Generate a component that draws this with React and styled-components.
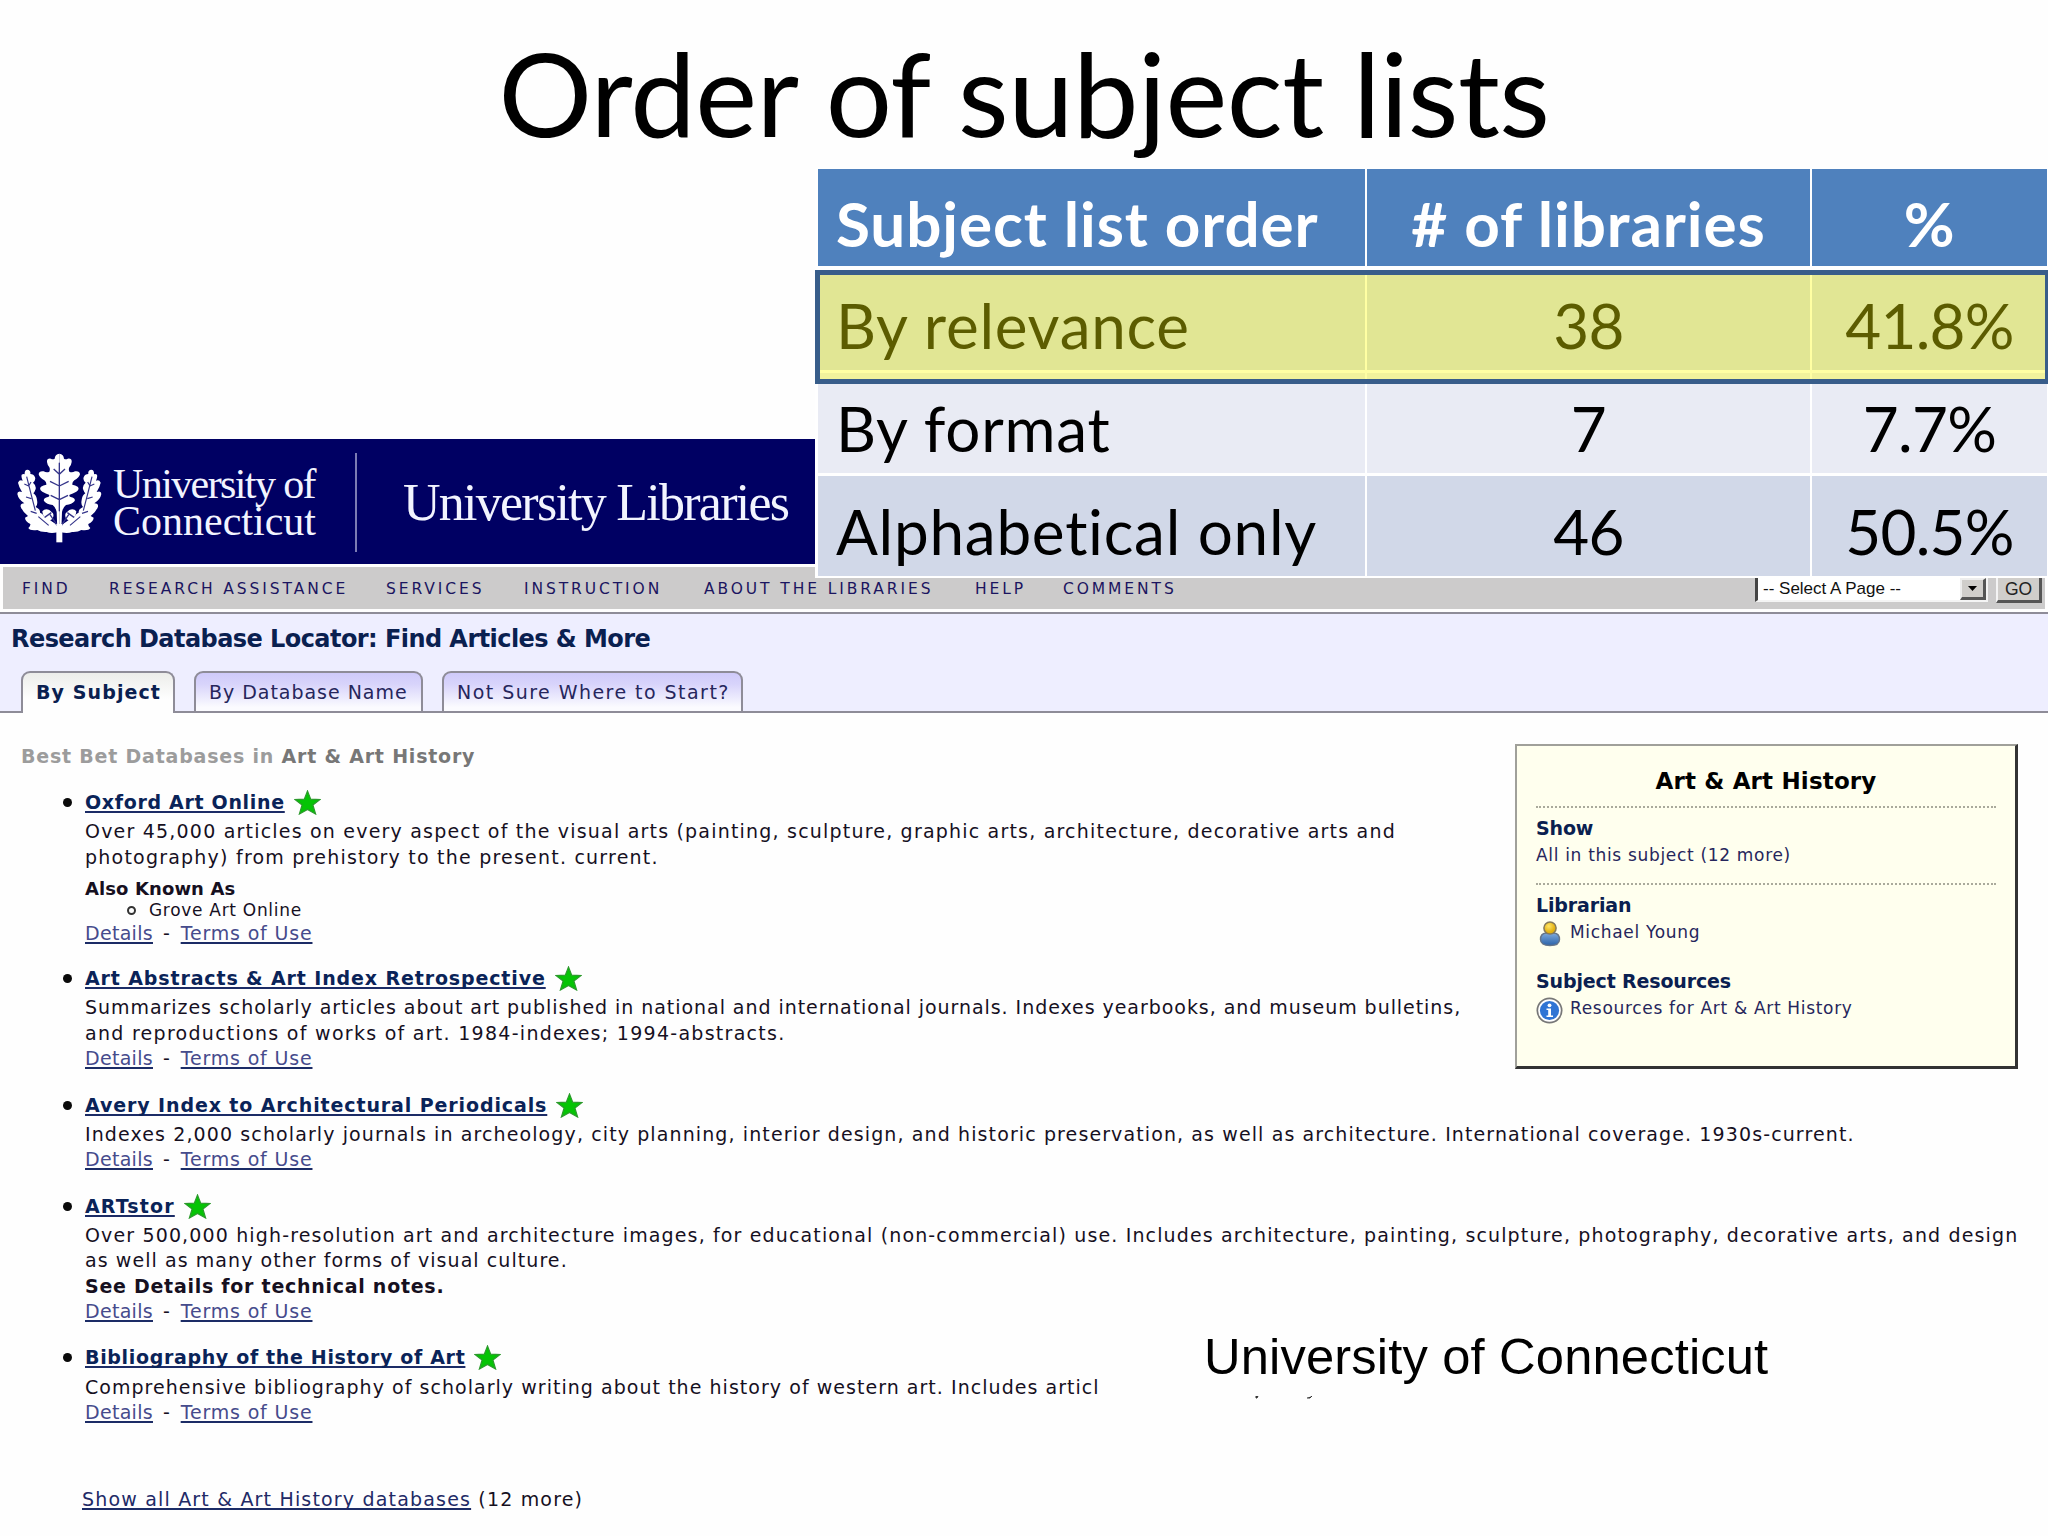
import React from 'react';
import styled, { createGlobalStyle } from 'styled-components';

const GlobalStyles = createGlobalStyle`
  * {
    box-sizing: border-box;
  }
  body {
    margin: 0;
    background: #fefefe;
    font-family: 'DejaVu Sans', Verdana, sans-serif;
  }
  h1, h2, h3, p, ul {
    margin: 0;
    padding: 0;
    font-weight: normal;
  }
  ul {
    list-style: none;
  }
`;

const Slide = styled.div`
  position: relative;
  width: 2048px;
  height: 1536px;
  overflow: hidden;
  background: #fefefe;
`;

const SlideTitle = styled.h1`
  height: 439px;
  font-family: Lato, sans-serif;
  font-size: 117px;
  letter-spacing: -0.5px;
  line-height: 185px;
  text-align: center;
  color: #000;
`;

/* Results table, sits over the page */

const TableBox = styled.div`
  position: absolute;
  top: 168px;
  left: 815px;
  width: 1233px;
  height: 410px;
  padding: 1px 1px 0 3px;
  background: #fff;
  font-family: Lato, sans-serif;
  font-size: 62px;
`;

const TableRow = styled.div`
  display: grid;
  grid-template-columns: 547px 443px 1fr;
  column-gap: 2px;
  height: ${p => (p.$head ? 97 : 100)}px;
  margin-bottom: ${p => (p.$head ? 4 : 3)}px;
  color: ${p => (p.$head ? '#fff' : '#000')};
  font-weight: ${p => (p.$head ? 'bold' : 'normal')};
  letter-spacing: ${p => (p.$head ? 0.9 : 0.75)}px;
  line-height: ${p => (p.$head ? 85 : 87)}px;

  & > div {
    background: ${p => p.$bg};
  }
`;

const Cell = styled.div`
  padding: ${p => (p.$label ? '12px 0 0 18px' : '12px 0 0')};
  text-align: ${p => (p.$label ? 'left' : 'center')};
  letter-spacing: ${p => (p.$num ? '-0.7px' : 'inherit')};
  white-space: nowrap;
`;

const Highlight = styled.div`
  position: absolute;
  top: 102px;
  left: 0;
  width: 1235px;
  height: 114px;
  border: 5px solid #385d8a;
  background: rgba(255, 255, 0, 0.36);
  background-clip: padding-box;
`;

/* Site header */

const Banner = styled.header`
  display: flex;
  height: 125px;
  width: 815px;
  padding-left: 10px;
  background: #000063;
  color: #f2f4ff;
  font-family: 'Liberation Serif', serif;
  white-space: nowrap;

  & > svg {
    margin-top: 11px;
  }
`;

const Wordmark = styled.div`
  width: 242px;
  margin: 27px 0 0 8px;
  font-size: 42px;
  line-height: 36.5px;

  & > div {
    letter-spacing: 0;
  }
  & > div:first-child {
    letter-spacing: -1.6px;
  }
`;

const LibraryName = styled.div`
  height: 99px;
  margin-top: 14px;
  padding-left: 46px;
  border-left: 2px solid #7c7cb4;
  font-size: 52px;
  letter-spacing: -1.75px;
  line-height: 99px;
`;

const Nav = styled.nav`
  display: flex;
  height: 42px;
  margin: 3px 3px 0;
  background: #cccbcb;
`;

const NavLinks = styled.div`
  display: grid;
  grid-template-columns: 87px 277px 138px 180px 271px 88px 647px;
  padding: 2px 0 0 19px;
  font-size: 15.5px;
  line-height: 40px;
  letter-spacing: 2.9px;
  color: #1b1560;
  white-space: nowrap;
`;

const PageSelect = styled.div`
  display: flex;
  justify-content: space-between;
  width: 233px;
  height: 26px;
  margin: 9px 8px 0 45px;
  border: 2px solid #f4f4f4;
  border-left: 3px solid #444;
  background: #fff;
  font-family: 'Liberation Sans', sans-serif;
  font-size: 17px;
  line-height: 21px;
  color: #111;
  padding-left: 5px;
`;

const ArrowButton = styled.div`
  display: flex;
  align-items: center;
  justify-content: center;
  width: 26px;
  height: 22px;
  border: 2px solid #eee;
  border-right: 3px solid #555;
  border-bottom: 3px solid #555;
  background: #d0cecb;
`;

const GoButton = styled.div`
  width: 46px;
  height: 28px;
  margin-top: 8px;
  border: 2px solid #f4f4f4;
  border-right: 3px solid #555;
  border-bottom: 3px solid #555;
  background: #d0cecb;
  font-family: 'Liberation Sans', sans-serif;
  font-size: 17.5px;
  line-height: 24px;
  text-align: center;
  color: #222;
`;

const LocatorBar = styled.section`
  margin-top: 3px;
  border-top: 2px solid #8e8c98;
  border-bottom: 2px solid #8e8c98;
  background: #eeeeff;
`;

const LocatorTitle = styled.h2`
  height: 57px;
  padding-left: 11px;
  font-size: 24px;
  font-weight: bold;
  line-height: 50px;
  letter-spacing: -0.56px;
  color: #0a2050;
`;

const Tabs = styled.div`
  display: flex;
  gap: 19px;
  height: 40px;
  padding-left: 21px;
`;

const Tab = styled.div`
  width: ${p => p.$w}px;
  height: ${p => (p.$active ? 42 : 40)}px;
  padding-left: 13px;
  border: 2px solid #8e8c98;
  border-bottom: 0;
  border-radius: 9px 9px 0 0;
  background: ${p =>
    p.$active
      ? 'linear-gradient(#ecedea, #fefefe 65%)'
      : 'linear-gradient(#cfcafa, #d8d4fb 30%, #fbfbff 90%)'};
  font-size: 19px;
  font-weight: ${p => (p.$active ? 'bold' : 'normal')};
  line-height: 39px;
  letter-spacing: ${p => p.$ls}px;
  color: ${p => (p.$active ? '#0a2050' : '#26265c')};
  white-space: nowrap;
`;

/* Database list */

const Content = styled.main`
  font-size: 19px;
  letter-spacing: 1.14px;
  color: #16101f;
  white-space: nowrap;
`;

const BestBets = styled.h3`
  padding: 30px 0 17px 21px;
  font-size: 19px;
  font-weight: bold;
  line-height: 26px;
  letter-spacing: 0.79px;
  color: #9c9c9c;

  & span {
    color: #777;
  }
`;

const Item = styled.li`
  display: grid;
  grid-template-columns: 22px 1fr;
  margin: 0 0 17.1px 63px;

  &:first-child {
    margin-bottom: 15.5px;
  }
`;

const Bullet = styled.div`
  width: 9px;
  height: 9px;
  margin-top: 12px;
  border-radius: 50%;
  background: #0a0a0a;
`;

const ItemTitle = styled.div`
  display: flex;
  gap: 9px;
  height: 33.1px;
  font-weight: bold;
  line-height: 32.4px;
  letter-spacing: ${p => p.$ls}px;

  & > svg {
    margin-top: 4px;
  }
`;

const Link = styled.a`
  color: ${p => (p.$strong ? '#0a2358' : '#464b8c')};
  text-decoration: underline;
  text-decoration-color: #1c2c66;
  text-decoration-thickness: ${p => (p.$strong ? 2 : 1.5)}px;
  text-decoration-skip-ink: none;
  text-underline-offset: 2px;
`;

const TextLine = styled.p`
  line-height: 25.4px;
  letter-spacing: ${p => p.$ls || 1.14}px;
  font-weight: ${p => (p.$bold ? 'bold' : 'normal')};
`;

const Links = styled(TextLine)`
  letter-spacing: 0.83px;

  & a:first-child {
    letter-spacing: 0.3px;
  }
  & span {
    margin: 0 10px 0 10px;
  }
`;

const AlsoKnown = styled.div`
  margin: 6.8px 0 2.6px;
  font-size: 18px;
  line-height: 24px;
  letter-spacing: 0.1px;
  font-weight: bold;
`;

const Alias = styled.div`
  display: flex;
  align-items: center;
  gap: 13px;
  padding: 0.8px 0 0 42px;
  font-size: 17px;
  font-weight: normal;
  line-height: 17.2px;
  letter-spacing: 0.7px;

  &::before {
    content: '';
    width: 9px;
    height: 9px;
    box-sizing: border-box;
    border: 2px solid #333;
    border-radius: 50%;
  }
`;

const ShowAll = styled.p`
  margin-top: 61px;
  padding-left: 82px;
  line-height: 26px;
  letter-spacing: 1.18px;

  & a {
    color: #222a66;
  }
`;

/* Subject panel */

const Panel = styled.aside`
  float: right;
  width: 503px;
  height: 325px;
  margin: 31px 30px 0 0;
  padding: 11px 19px 0;
  border: 2px solid #a0a09a;
  border-right: 3px solid #333;
  border-bottom: 3px solid #333;
  background: #ffffee;
  color: #26265c;
`;

const PanelTitle = styled.h3`
  height: 51px;
  border-bottom: 2px dotted #aaaa9c;
  font-size: 23px;
  font-weight: bold;
  line-height: 49px;
  letter-spacing: 0.16px;
  text-align: center;
  color: #000;
`;

const PanelSection = styled.section`
  padding: 8px 0 ${p => (p.$ruled ? 15 : 16)}px;
  border-bottom: ${p => (p.$ruled ? '2px dotted #aaaa9c' : '0')};
`;

const PanelHead = styled.div`
  height: 27px;
  font-size: 19px;
  font-weight: bold;
  line-height: 25px;
  letter-spacing: -0.14px;
  color: #0a2050;
`;

const PanelLine = styled.div`
  display: flex;
  height: 25px;
  font-size: 17px;
  line-height: 25px;
  letter-spacing: 0.68px;

  & > svg {
    flex: none;
    margin: 0.5px 7px 0 0;
  }
`;

const Caption = styled.div`
  position: absolute;
  top: 1320px;
  left: 1100px;
  width: 760px;
  height: 76px;
  padding-left: 104px;
  background: #fefefe;
  font-family: 'Liberation Sans', Arial, sans-serif;
  font-size: 50.7px;
  line-height: 74px;
  letter-spacing: 0.15px;
  color: #000;
`;

const Specks = styled.svg`
  position: absolute;
  top: 1396px;
  left: 1254px;
`;

const halfLeaf =
  'M148 11 Q161 12 162 26 Q168 29 173 26 Q186 24 185 36 Q184 45 178 52 Q175 58 178 65 Q186 69 195 64 Q209 62 210 73 Q207 84 193 91 Q186 97 187 104 Q196 105 203 110 Q210 118 199 125 Q188 131 179 134 Q176 139 182 141 Q197 144 194 153 Q186 163 168 165 Q160 170 156 186 L154 240 H148 Z';
const sideLeaf =
  'M52 59 Q63 60 61 72 Q71 72 75 82 Q78 90 69 98 Q79 106 77 117 Q74 126 70 130 Q80 137 81 150 Q84 165 77 171 Q92 178 90 188 Q100 191 103 202 Q116 206 128 216 Q141 222 143 236 V247 Q122 252 110 246 Q92 247 82 240 Q60 243 55 234 Q62 228 61 222 Q46 215 45 203 L54 198 Q38 186 32 170 Q30 161 43 160 Q25 148 22 132 Q22 121 36 126 Q27 112 24 98 Q28 88 38 92 Q33 82 35 74 Q40 71 44 73 Q43 60 52 59 Z';

const OakLeaf = () => (
  <svg width="95" height="98" viewBox="0 0 285 294">
    {[undefined, 'matrix(-1 0 0 1 296 0)'].map((t, i) => (
      <g key={i} transform={t}>
        <path d={halfLeaf} fill="#fff" />
        <path d={sideLeaf} fill="#fff" />
        <path
          d="M148 38 V184 M148 73 L165 57 M148 108 L176 94 M148 149 L174 136"
          fill="none"
          stroke="#34348a"
          strokeWidth="4"
        />
        <path
          d="M50 80 L62 128 L76 182 M56 108 L43 102 M64 146 L48 141 M56 108 L63 96 M80 190 L62 184 M85 200 L116 226"
          fill="none"
          stroke="#34348a"
          strokeWidth="3.5"
        />
        <path d="M97 184 Q105 174 118 180 L129 190 Q133 198 126 208 L117 212 Q98 205 97 184 Z" fill="#fff" />
        <path d="M104 202 L124 188 M120 194 L142 226" fill="none" stroke="#34348a" strokeWidth="4" />
      </g>
    ))}
    <path d="M139 222 H157 V277 H139 Z" fill="#fff" />
  </svg>
);

const Star = () => (
  <svg width="27" height="25" viewBox="0 0 27 25">
    <path
      d="M13.5 1 L16.7 9.2 L26 9.6 L18.9 15 L21.6 24 L13.5 19.4 L5.4 24 L8.1 15 L1 9.6 L10.3 9.2 Z"
      fill="#05c405"
      stroke="#2c9a2c"
      strokeWidth="1.2"
    />
  </svg>
);

const PersonIcon = () => (
  <svg width="27" height="26" viewBox="0 0 27 26">
    <defs>
      <linearGradient id="body" x1="0" y1="0" x2="0" y2="1">
        <stop offset="0" stopColor="#7fa9dc" />
        <stop offset="1" stopColor="#2a62a8" />
      </linearGradient>
      <radialGradient id="head" cx="0.4" cy="0.35">
        <stop offset="0" stopColor="#ffe566" />
        <stop offset="1" stopColor="#e2b010" />
      </radialGradient>
    </defs>
    <path
      d="M4.5 18.5 Q4.5 12.5 10 12 H18 Q23.5 12.5 23.5 18.5 Q23.5 24.5 14 24.5 Q4.5 24.5 4.5 18.5 Z"
      fill="url(#body)"
      stroke="#66758a"
      strokeWidth="1.4"
    />
    <circle cx="14" cy="7" r="6.1" fill="url(#head)" stroke="#84795a" strokeWidth="1.5" />
  </svg>
);

const InfoIcon = () => (
  <svg width="27" height="27" viewBox="0 0 27 27">
    <circle cx="13.5" cy="13.5" r="12.2" fill="#fff" stroke="#777" strokeWidth="1.7" />
    <circle cx="13.5" cy="13.5" r="9.6" fill="#2f74d4" />
    <path d="M10.5 11.5 H15 V18.5 H17 V20 H10.5 V18.5 H12.2 V13 H10.5 Z" fill="#fff" />
    <circle cx="13.5" cy="8.3" r="1.9" fill="#fff" />
  </svg>
);

const tableRows = [
  { bg: '#d1d8e8', cells: ['By relevance', '38', '41.8%'] },
  { bg: '#e9ebf4', cells: ['By format', '7', '7.7%'] },
  { bg: '#d1d8e8', cells: ['Alphabetical only', '46', '50.5%'] },
];

const navLinks = [
  'FIND',
  'RESEARCH ASSISTANCE',
  'SERVICES',
  'INSTRUCTION',
  'ABOUT THE LIBRARIES',
  'HELP',
  'COMMENTS',
];

const databases = [
  {
    name: 'Oxford Art Online',
    ls: 0.68,
    lines: [
      ['Over 45,000 articles on every aspect of the visual arts (painting, sculpture, graphic arts, architecture, decorative arts and', 1.2],
      ['photography) from prehistory to the present. current.', 1.22],
    ],
    alias: 'Grove Art Online',
  },
  {
    name: 'Art Abstracts & Art Index Retrospective',
    ls: 0.87,
    lines: [
      ['Summarizes scholarly articles about art published in national and international journals. Indexes yearbooks, and museum bulletins,', 0.95],
      ['and reproductions of works of art. 1984-indexes; 1994-abstracts.', 1.28],
    ],
  },
  {
    name: 'Avery Index to Architectural Periodicals',
    ls: 0.89,
    lines: [
      ['Indexes 2,000 scholarly journals in archeology, city planning, interior design, and historic preservation, as well as architecture. International coverage. 1930s-current.', 1.11],
    ],
  },
  {
    name: 'ARTstor',
    ls: 1.15,
    lines: [
      ['Over 500,000 high-resolution art and architecture images, for educational (non-commercial) use. Includes architecture, painting, sculpture, photography, decorative arts, and design', 1.14],
      ['as well as many other forms of visual culture.', 1.07],
    ],
    note: 'See Details for technical notes.',
  },
  {
    name: 'Bibliography of the History of Art',
    ls: 0.66,
    lines: [
      ['Comprehensive bibliography of scholarly writing about the history of western art. Includes articl', 1.04],
    ],
  },
];

const ResultsTable = () => (
  <TableBox>
    <TableRow $head $bg="#4f81bd">
      <Cell $label>Subject list order</Cell>
      <Cell># of libraries</Cell>
      <Cell>%</Cell>
    </TableRow>
    {tableRows.map(({ bg, cells }) => (
      <TableRow key={cells[0]} $bg={bg}>
        <Cell $label>{cells[0]}</Cell>
        <Cell $num>{cells[1]}</Cell>
        <Cell $num>{cells[2]}</Cell>
      </TableRow>
    ))}
    <Highlight />
  </TableBox>
);

const Database = ({ name, ls, lines, alias, note }) => (
  <Item>
    <Bullet />
    <div>
      <ItemTitle $ls={ls}>
        <Link $strong>{name}</Link>
        <Star />
      </ItemTitle>
      {lines.map(([text, spacing]) => (
        <TextLine key={text} $ls={spacing}>{text}</TextLine>
      ))}
      {note && <TextLine $bold $ls={0.73}>{note}</TextLine>}
      {alias && (
        <AlsoKnown>
          Also Known As
          <Alias>{alias}</Alias>
        </AlsoKnown>
      )}
      <Links>
        <Link>Details</Link>
        <span>-</span>
        <Link>Terms of Use</Link>
      </Links>
    </div>
  </Item>
);

const SubjectPanel = () => (
  <Panel>
    <PanelTitle>Art &amp; Art History</PanelTitle>
    <PanelSection $ruled>
      <PanelHead>Show</PanelHead>
      <PanelLine>All in this subject (12 more)</PanelLine>
    </PanelSection>
    <PanelSection>
      <PanelHead>Librarian</PanelHead>
      <PanelLine>
        <PersonIcon />
        Michael Young
      </PanelLine>
    </PanelSection>
    <PanelSection>
      <PanelHead>Subject Resources</PanelHead>
      <PanelLine>
        <InfoIcon />
        Resources for Art &amp; Art History
      </PanelLine>
    </PanelSection>
  </Panel>
);

const App = () => (
  <>
    <GlobalStyles />
    <Slide>
      <SlideTitle>Order of subject lists</SlideTitle>
      <Banner>
        <OakLeaf />
        <Wordmark>
          <div>University of</div>
          <div>Connecticut</div>
        </Wordmark>
        <LibraryName>University Libraries</LibraryName>
      </Banner>
      <Nav>
        <NavLinks>
          {navLinks.map(label => (
            <span key={label}>{label}</span>
          ))}
        </NavLinks>
        <PageSelect>
          -- Select A Page --
          <ArrowButton>
            <svg width="9" height="5" viewBox="0 0 9 5">
              <path d="M0 0 H9 L4.5 5 Z" fill="#000" />
            </svg>
          </ArrowButton>
        </PageSelect>
        <GoButton>GO</GoButton>
      </Nav>
      <LocatorBar>
        <LocatorTitle>Research Database Locator: Find Articles &amp; More</LocatorTitle>
        <Tabs>
          <Tab $active $w={154} $ls={1.1}>By Subject</Tab>
          <Tab $w={229} $ls={0.97}>By Database Name</Tab>
          <Tab $w={301} $ls={1.46}>Not Sure Where to Start?</Tab>
        </Tabs>
      </LocatorBar>
      <Content>
        <SubjectPanel />
        <BestBets>
          Best Bet Databases in <span>Art &amp; Art History</span>
        </BestBets>
        <ul>
          {databases.map(db => (
            <Database key={db.name} {...db} />
          ))}
        </ul>
        <ShowAll>
          <Link>Show all Art &amp; Art History databases</Link> (12 more)
        </ShowAll>
      </Content>
      <ResultsTable />
      <Caption>University of Connecticut</Caption>
      <Specks width="64" height="4" viewBox="0 0 64 4">
        <path d="M2 0 H4 L3 2 H2 Z M58 0 L56 2 L53 2" fill="#333" stroke="#333" />
      </Specks>
    </Slide>
  </>
);

export default App;
